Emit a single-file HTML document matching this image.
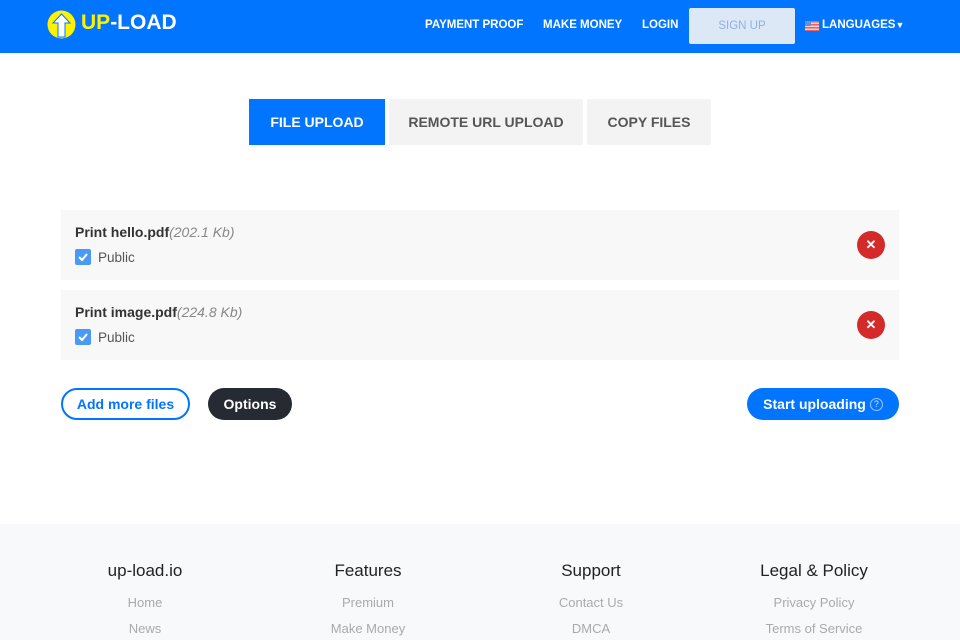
<!DOCTYPE html>
<html><head><meta charset="utf-8"><style>
*{margin:0;padding:0;box-sizing:border-box}
body{width:960px;height:640px;overflow:hidden;background:#fff;font-family:"Liberation Sans",sans-serif;position:relative}
.a{position:absolute}
.nav{left:0;top:0;width:960px;height:53px;background:#0275ff}
.nl{color:#fff;font-size:11.5px;font-weight:bold;top:19px}
.tab{top:99px;height:46px;display:flex;align-items:center;justify-content:center;font-size:14px;font-weight:bold;color:#555;background:#f3f3f3}
.row{left:61px;width:838px;height:70px;background:#f8f8f8}
.fn{left:14px;top:14px;font-size:14px;font-weight:bold;color:#333}
.fn i{font-weight:normal;color:#888}
.cb{left:14px;top:39px;width:16px;height:16px;background:#4a9af5;border-radius:2px}
.pub{left:37px;top:40px;font-size:13.5px;color:#555}
.x{left:796px;top:21px;width:28px;height:28px;border-radius:50%;background:#d32a2a;color:#fff;text-align:center;line-height:28px;font-size:13px;font-weight:bold}
.btn{top:388px;height:32px;border-radius:16px;font-size:14px;font-weight:bold;display:flex;align-items:center;justify-content:center}
.foot{left:0;top:524px;width:960px;height:116px;background:#f8f9fb}
.fh{font-size:17px;color:#222;width:200px;text-align:center;top:561px}
.fi{font-size:13px;color:#aaa;width:200px;text-align:center}
</style></head><body>
<div class="a nav"></div>
<svg class="a" style="left:47px;top:10px" width="29" height="29" viewBox="0 0 29 29"><circle cx="14.5" cy="14.5" r="14" fill="#fff200"/><path d="M14.5 4 L23 13 H18 V27 H11 V13 H6 Z" fill="#fff" stroke="#0275ff" stroke-width="1"/></svg>
<div class="a" style="left:81px;top:11px;font-size:21px;font-weight:bold;color:#fff"><span style="color:#fff200">UP</span>-LOAD</div>
<div class="a nl" style="left:425px;top:19px">PAYMENT PROOF</div>
<div class="a nl" style="left:543px;top:19px">MAKE MONEY</div>
<div class="a nl" style="left:642px;top:19px">LOGIN</div>
<div class="a" style="left:689px;top:8px;width:106px;height:36px;background:#dde8f7;border-radius:2px;color:#8fb0e6;font-size:11.5px;text-align:center;line-height:36px">SIGN UP</div>
<div class="a" style="left:805px;top:21px;width:14px;height:10px;background:repeating-linear-gradient(#d66 0 1.5px,#fcc 1.5px 3px)"><div style="width:6px;height:5px;background:#6a8fd8"></div></div>
<div class="a nl" style="left:822px;top:19px">LANGUAGES<span style="font-size:9px">▼</span></div>
<div class="a tab" style="left:249px;width:136px;background:#0275ff;color:#fff">FILE UPLOAD</div>
<div class="a tab" style="left:389px;width:194px">REMOTE URL UPLOAD</div>
<div class="a tab" style="left:587px;width:124px">COPY FILES</div>
<div class="a row" style="top:210px"><div class="a fn">Print hello.pdf<i>(202.1 Kb)</i></div><div class="a cb"><svg width="16" height="16"><path d="M4 8l3 3 5-6" stroke="#fff" stroke-width="2" fill="none"/></svg></div><div class="a pub">Public</div><div class="a x">✕</div></div>
<div class="a row" style="top:290px"><div class="a fn">Print image.pdf<i>(224.8 Kb)</i></div><div class="a cb"><svg width="16" height="16"><path d="M4 8l3 3 5-6" stroke="#fff" stroke-width="2" fill="none"/></svg></div><div class="a pub">Public</div><div class="a x">✕</div></div>
<div class="a btn" style="left:61px;width:129px;border:2px solid #0275ff;color:#0275ff">Add more files</div>
<div class="a btn" style="left:208px;width:84px;background:#262b33;color:#fff">Options</div>
<div class="a btn" style="left:747px;width:152px;background:#0275ff;color:#fff">Start uploading <span style="display:inline-block;width:13px;height:13px;border:1px solid #9cc6ff;border-radius:50%;font-size:9px;line-height:11px;text-align:center;margin-left:4px;font-weight:normal;color:#cfe3ff">?</span></div>
<div class="a foot"></div>
<div class="a fh" style="left:45px">up-load.io</div>
<div class="a fh" style="left:268px">Features</div>
<div class="a fh" style="left:491px">Support</div>
<div class="a fh" style="left:714px">Legal &amp; Policy</div>
<div class="a fi" style="left:45px;top:595px">Home</div>
<div class="a fi" style="left:45px;top:621px">News</div>
<div class="a fi" style="left:268px;top:595px">Premium</div>
<div class="a fi" style="left:268px;top:621px">Make Money</div>
<div class="a fi" style="left:491px;top:595px">Contact Us</div>
<div class="a fi" style="left:491px;top:621px">DMCA</div>
<div class="a fi" style="left:714px;top:595px">Privacy Policy</div>
<div class="a fi" style="left:714px;top:621px">Terms of Service</div>
</body></html>
